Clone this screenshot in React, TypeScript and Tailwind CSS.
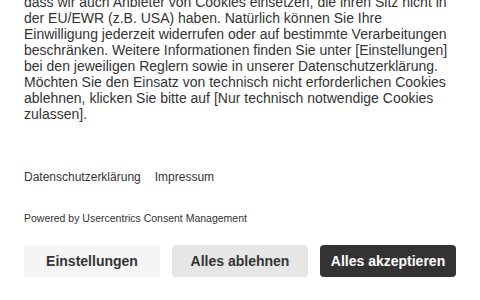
import React from 'react';

const App: React.FC = () => {
  return (
    <div className="w-[480px] h-[300px] overflow-hidden bg-white font-['Liberation_Sans',Arial,sans-serif] text-[#333333]">
      <div className="px-6">
        <p className="mt-[-6px] text-[14px] leading-[16px]">
          dass wir auch Anbieter von Cookies einsetzen, die ihren Sitz nicht in der EU/EWR (z.B. USA) haben. Natürlich können Sie Ihre Einwilligung jederzeit widerrufen oder auf bestimmte Verarbeitungen beschränken. Weitere Informationen finden Sie unter [Einstellungen] bei den jeweiligen Reglern sowie in unserer Datenschutzerklärung. Möchten Sie den Einsatz von technisch nicht erforderlichen Cookies ablehnen, klicken Sie bitte auf [Nur technisch notwendige Cookies zulassen].
        </p>
        <div className="mt-[48px] flex gap-[14px] text-[12px] leading-[14px]">
          <a className="cursor-pointer">Datenschutzerklärung</a>
          <a className="cursor-pointer">Impressum</a>
        </div>
        <p className="mt-[28px] text-[10.5px] leading-[12px]">Powered by Usercentrics Consent Management</p>
        <div className="mt-[21px] flex gap-3">
          <button className="w-[136px] h-[32px] rounded-[4px] bg-[#f5f5f5] text-[14px] font-bold text-[#333333]">Einstellungen</button>
          <button className="w-[136px] h-[32px] rounded-[4px] bg-[#e6e6e6] text-[14px] font-bold text-[#333333]">Alles ablehnen</button>
          <button className="w-[136px] h-[32px] rounded-[4px] bg-[#333333] text-[14px] font-bold text-white">Alles akzeptieren</button>
        </div>
      </div>
    </div>
  );
};

export default App;
